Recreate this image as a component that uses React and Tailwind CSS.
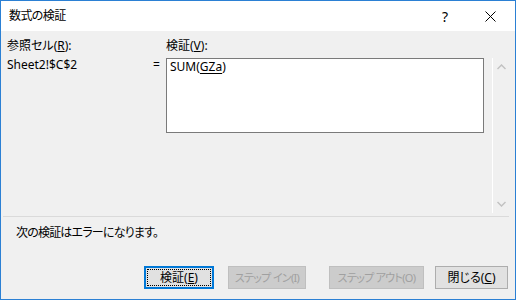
import React from "react";

const font = "font-['Noto_Sans','Noto_Sans_CJK_JP',sans-serif] [font-feature-settings:'palt']";

const Btn = ({ children, className = "", disabled, focused }) => (
    <div
        className={
            "h-[23px] flex items-center justify-center leading-none whitespace-nowrap box-border " +
            (disabled
                ? "bg-[#cccccc] border border-[#bfbfbf] text-[#a0a0a0] text-[11px] tracking-[-0.7px] "
                : focused
                ? "bg-[#e1e1e1] border-2 border-[#0078d7] text-black text-[12px] p-px "
                : "bg-[#e1e1e1] border border-[#adadad] text-black text-[12px] ") +
            className
        }
    >
        {focused ? (
            <div className="w-full h-full border border-dotted border-black flex items-center justify-center">{children}</div>
        ) : (
            children
        )}
    </div>
);

const App = () => (
    <div className={"w-[516px] h-[300px] border border-[#2b80d4] flex flex-col bg-[#f0f0f0] text-[12px] text-black " + font}>
        {/* Title bar */}
        <div className="h-[30px] bg-white flex items-center">
            <span className="ml-[8px] flex-1 tracking-[-0.6px]">数式の検証</span>
            <span className="mr-[37px] text-[14px]">?</span>
            <svg className="mr-[19px]" width="11" height="11" viewBox="0 0 11 11">
                <path d="M0.5 0.5L10.5 10.5M10.5 0.5L0.5 10.5" stroke="#000" strokeWidth="1" />
            </svg>
        </div>

        {/* Body */}
        <div className="flex-1 flex flex-col">
            <div className="h-[185px] flex pl-[6px] pt-[7px]">
                <div className="w-[146px] flex flex-col">
                    <div className="h-[16px] leading-[16px]">
                        参照セル(<u>R</u>):
                    </div>
                    <div className="h-[16px] leading-[16px] mt-[3px]">Sheet2!$C$2</div>
                </div>
                <div className="w-[13px] pt-[19px] leading-[16px]">=</div>
                <div className="flex flex-col">
                    <div className="h-[16px] leading-[16px]">
                        検証(<u>V</u>):
                    </div>
                    <div className="mt-[4px] w-[318px] h-[75px] border border-[#7a7a7a] bg-white pl-[3px] leading-[16px]">
                        SUM(<span className="underline underline-offset-2">GZa</span>)
                    </div>
                </div>
                <div className="ml-[8px] mt-[20px] h-[155px] w-[17px] border-l border-white flex flex-col items-center justify-between py-[6px]">
                    <svg width="9" height="6" viewBox="0 0 9 6">
                        <path d="M0.5 5L4.5 1L8.5 5" stroke="#c2c2c2" strokeWidth="1.5" fill="none" />
                    </svg>
                    <svg width="9" height="6" viewBox="0 0 9 6">
                        <path d="M0.5 1L4.5 5L8.5 1" stroke="#c2c2c2" strokeWidth="1.5" fill="none" />
                    </svg>
                </div>
            </div>

            <div className="ml-[2px] w-[506px] h-px bg-[#dadada]" />

            <div className="pl-[15px] mt-[8px] h-[16px] leading-[16px] tracking-[-0.8px]">次の検証はエラーになります。</div>

            {/* Buttons */}
            <div className="flex mt-[25px]">
                <Btn focused className="ml-[143px] w-[70px]">
                    <span>
                        検証(<u>E</u>)
                    </span>
                </Btn>
                <Btn disabled className="ml-[14px] w-[78px]">
                    ステップ イン(I)
                </Btn>
                <Btn disabled className="ml-[23px] w-[95px]">
                    ステップ アウト(O)
                </Btn>
                <Btn className="ml-[11px] w-[73px]">
                    <span>
                        閉じる(<u>C</u>)
                    </span>
                </Btn>
            </div>
        </div>
    </div>
);

export default App;
